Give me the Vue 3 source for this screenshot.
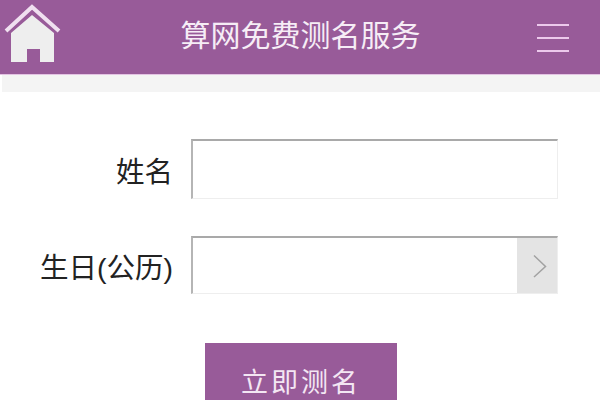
<script setup>
const rows = [
  { label: '姓名', picker: false },
  { label: '生日(公历)', picker: true },
]
</script>

<template>
  <div class="page">
    <header class="bar">
      <svg class="home" viewBox="0 0 64 64" width="64" height="64">
        <path d="M11 33 L32 15 L54 33 L54 62 L40 62 L40 49 L27 49 L27 62 L11 62 Z" fill="#eeeeee" />
        <path d="M6 31 L32 7 L59 31" fill="none" stroke="#f0e0f0" stroke-width="4" />
      </svg>
      <h1 class="title">算网免费测名服务</h1>
      <div class="menu"><i></i><i></i><i></i></div>
    </header>
    <div class="strip"></div>
    <form class="form" @submit.prevent>
      <div v-for="r in rows" :key="r.label" class="row" :class="{ short: r.picker }">
        <label class="label">{{ r.label }}</label>
        <div class="field">
          <div class="input"></div>
          <div v-if="r.picker" class="picker">
            <svg viewBox="0 0 14 24" width="14" height="24">
              <path d="M1 1.5 L12.5 12.5 L1 23" fill="none" stroke="#a2a2a2" stroke-width="1.5" />
            </svg>
          </div>
        </div>
      </div>
      <button class="go" type="button">立即测名</button>
    </form>
  </div>
</template>

<style>
html, body { margin: 0; background: #fff; }
</style>

<style scoped>
.page {
  width: 600px;
  height: 400px;
  overflow: hidden;
  background: #fff;
  font-family: "Liberation Sans", "Noto Sans CJK SC", sans-serif;
}
.bar {
  height: 75px;
  box-sizing: border-box;
  background: #985b99;
  border-bottom: 1px solid #e3c3e3;
  display: flex;
  align-items: flex-start;
  position: relative;
}
.home { flex: none; }
.title {
  position: absolute;
  left: 0;
  right: 0;
  top: 16px;
  margin: 0;
  padding-left: 1px;
  text-align: center;
  color: #f6edf6;
  font-size: 30px;
  line-height: 40px;
  font-weight: 400;
}
.menu {
  margin-left: auto;
  margin-right: 31px;
  margin-top: 24px;
  width: 32px;
  display: flex;
  flex-direction: column;
  gap: 11px;
}
.menu i {
  display: block;
  height: 2px;
  background: #ecc9ec;
}
.strip { height: 17px; background: #f4f4f4; margin-left: 2px; }
.form { padding-top: 47px; display: flex; flex-direction: column; }
.row {
  height: 60px;
  margin-bottom: 37px;
  display: flex;
  align-items: center;
}
.row.short { height: 58px; margin-bottom: 49px; }
.label {
  width: 173px;
  flex: none;
  text-align: right;
  font-size: 28.5px;
  line-height: 40px;
  padding-top: 5px;
  color: #222;
}
.field {
  margin-left: 18px;
  width: 367px;
  height: 100%;
  box-sizing: border-box;
  display: flex;
  border-top: 2px solid #a9a9a9;
  border-left: 2px solid #b5b5b5;
  border-right: 1px solid #eeeeee;
  border-bottom: 1px solid #eeeeee;
}
.input { flex: 1; }
.picker {
  width: 40px;
  padding-left: 5px;
  box-sizing: border-box;
  background: #e4e4e4;
  display: flex;
  align-items: center;
  justify-content: center;
}
.go {
  align-self: flex-start;
  margin: 0 0 0 205px;
  width: 192px;
  height: 70px;
  border: 0;
  padding: 4px 0 0;
  background: #985b99;
  color: #f3e6f3;
  font-family: "Noto Sans CJK SC", sans-serif;
  font-size: 27px;
  letter-spacing: 3px;
  font-weight: 400;
}
</style>
